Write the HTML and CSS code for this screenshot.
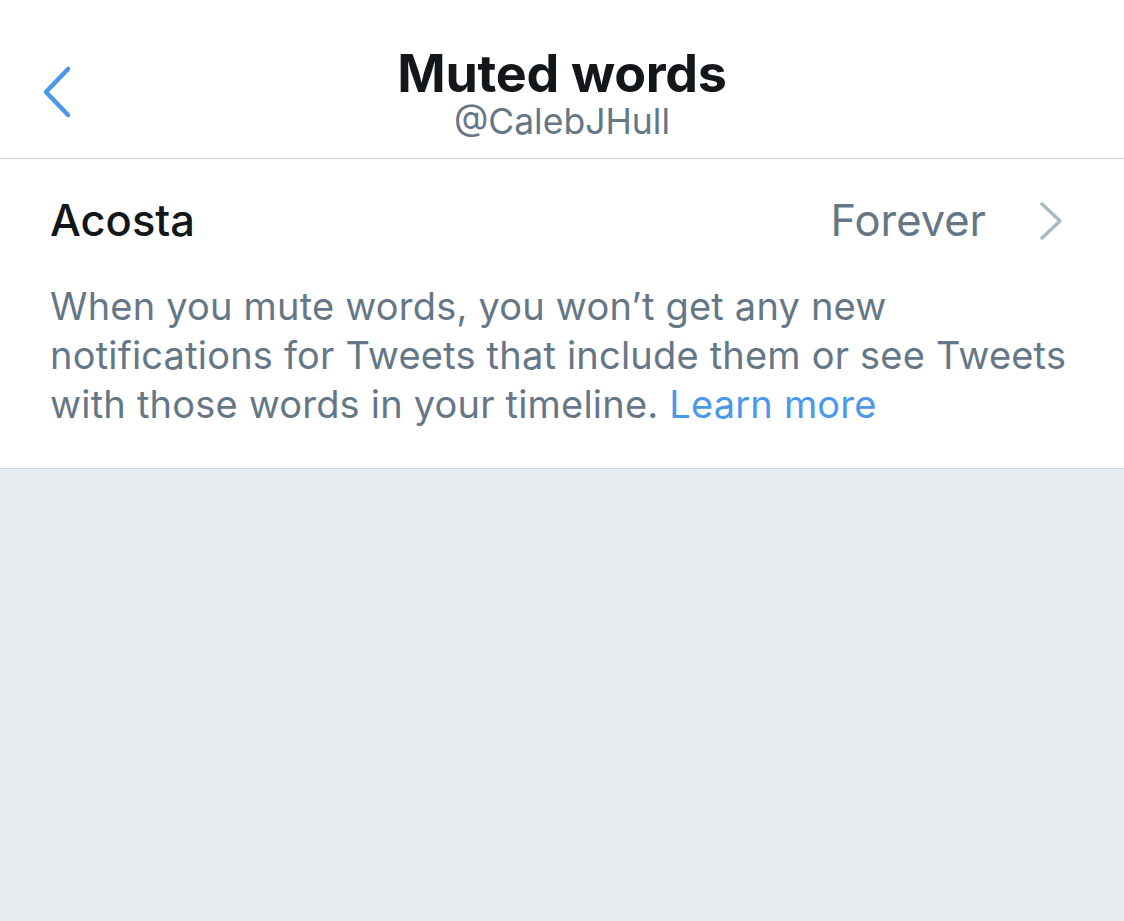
FILE: index.html
```html
<!DOCTYPE html>
<html>
<head>
<meta charset="utf-8">
<link rel="stylesheet" href="styles.css">
</head>
<body>
<header class="nav">
  <button class="back" aria-label="Back">
    <svg width="40" height="60" viewBox="0 0 40 60"><path d="M27 8 L5 31 L27 54" fill="none" stroke="#4a99e9" stroke-width="4.5" stroke-linecap="round" stroke-linejoin="round"/></svg>
  </button>
  <div class="titles">
    <div class="title">Muted words</div>
    <div class="subtitle">@CalebJHull</div>
  </div>
</header>
<section class="card">
  <div class="row">
    <span class="word">Acosta</span>
    <span class="dur">Forever</span>
    <svg class="chev" width="30" height="40" viewBox="0 0 30 40"><path d="M6 4 L24 21 L6 38" fill="none" stroke="#aab8c2" stroke-width="3.5" stroke-linecap="round" stroke-linejoin="round"/></svg>
  </div>
  <p class="desc">When you mute words, you won’t get any new notifications for Tweets that include them or see Tweets with those words in your timeline. <a href="#">Learn more</a></p>
</section>
</body>
</html>
```
FILE: styles.css
```css
html, body { margin: 0; padding: 0; }
body {
  background: #e6ecf0;
  font-family: Inter, "Noto Sans", sans-serif;
  width: 1124px;
  height: 921px;
  overflow: hidden;
}
.nav {
  position: relative;
  height: 158px;
  background: #fff;
  border-bottom: 1px solid #c8cdd2;
  display: flex;
  justify-content: center;
  align-items: flex-start;
}
.back {
  position: absolute;
  left: 41px;
  top: 61px;
  border: 0;
  background: none;
  padding: 0;
}
.back svg { display: block; }
.titles { text-align: center; padding-top: 46px; }
.title {
  font-size: 52px;
  font-weight: 700;
  color: #14171a;
  line-height: 56px;
  letter-spacing: -0.3px;
}
.subtitle {
  font-size: 35.5px;
  color: #657786;
  line-height: 40px;
}
.card {
  background: #fff;
  border-bottom: 1px solid #d2d9de;
  padding: 0 50px 0 50px;
  height: 310px;
  box-sizing: border-box;
}
.row {
  display: flex;
  align-items: center;
  height: 122px;
}
.word {
  font-size: 43.5px;
  font-weight: 500;
  color: #14171a;
  flex: 1;
}
.dur {
  font-size: 43.5px;
  color: #657786;
  margin-right: 50px;
}
.chev { margin-right: 8px; display: block; }
.desc {
  margin: 0;
  padding-top: 1px;
  font-size: 38px;
  line-height: 49px;
  letter-spacing: 0.2px;
  color: #657786;
}
.desc a { color: #4a99e9; text-decoration: none; }
```
